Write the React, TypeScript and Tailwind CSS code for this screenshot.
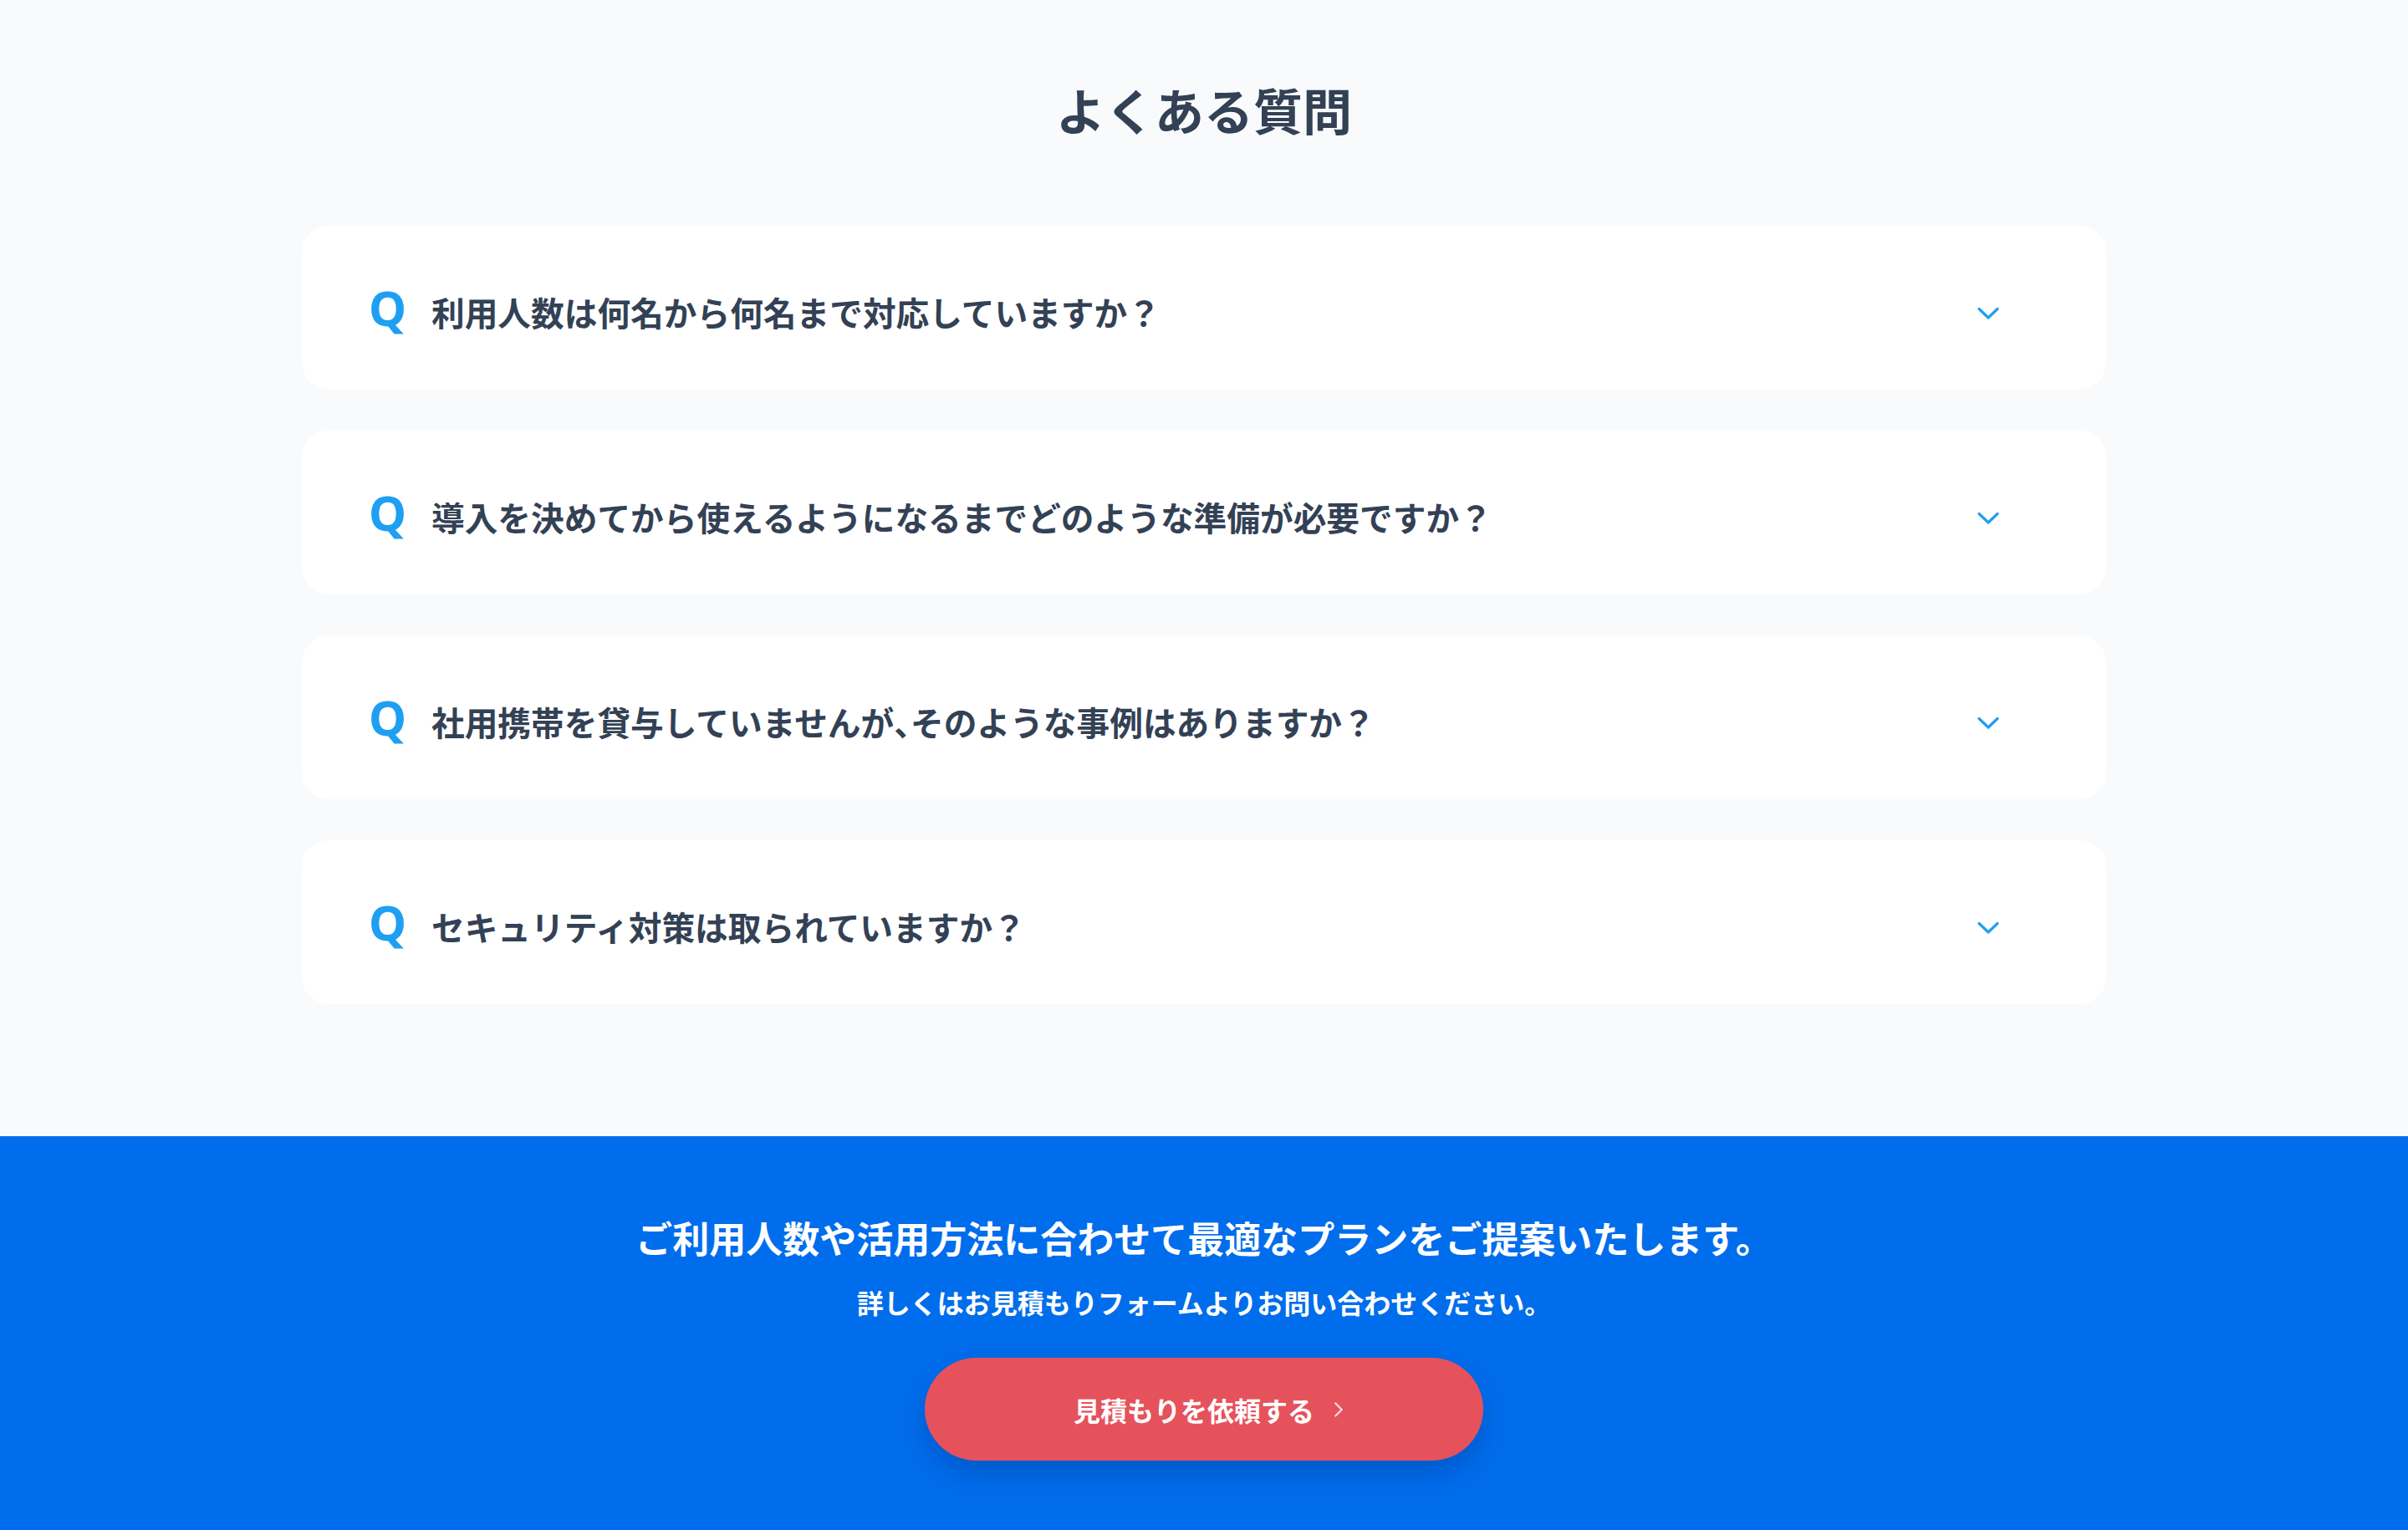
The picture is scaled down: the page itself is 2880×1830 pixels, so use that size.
import { ChevronRight } from "lucide-react";

const questions = [
  "利用人数は何名から何名まで対応していますか？",
  "導入を決めてから使えるようになるまでどのような準備が必要ですか？",
  "社用携帯を貸与していませんが、そのような事例はありますか？",
  "セキュリティ対策は取られていますか？",
];

const jpFont = "[font-family:'Noto_Sans_CJK_JP','Noto_Sans',sans-serif]";

function ChevronDown() {
  return (
    <svg width="26" height="16" viewBox="0 0 26 16" fill="none" aria-hidden="true" className="mt-[14px]">
      <path d="M2 2.5L13 13L24 2.5" stroke="#1f9ff2" strokeWidth="3.2" strokeLinecap="round" strokeLinejoin="round" />
    </svg>
  );
}

// the ideographic comma is set half-width, as in proportional Japanese text
function Question({ text }: { text: string }) {
  const parts = text.split("、");
  return (
    <>
      {parts.map((part, i) => (
        <span key={i}>
          {part}
          {i < parts.length - 1 && <span className="[font-feature-settings:'halt']">、</span>}
        </span>
      ))}
    </>
  );
}

function FaqItem({ text }: { text: string }) {
  return (
    <button
      type="button"
      className="flex h-[196px] w-full items-center rounded-[32px] bg-white pl-[80px] pr-[128px] text-left"
    >
      <span className="w-[44px] font-['Noto_Sans',sans-serif] text-[57px] font-bold leading-none text-[#1f9ff2]">
        Q
      </span>
      <span className="ml-[31px] flex-1 pt-[10px] text-[39.7px] font-bold leading-none text-[#334155]">
        <Question text={text} />
      </span>
      <ChevronDown />
    </button>
  );
}

export default function App() {
  return (
    <div className={`min-h-screen w-full bg-[#f8fafc] ${jpFont}`}>
      <section className="flex flex-col items-center pb-[158px] pt-[86px]">
        <h2 className="text-[59px] font-bold leading-[90px] text-[#334155]">よくある質問</h2>
        <div className="mt-[94px] flex w-[2158px] flex-col gap-[49px]">
          {questions.map((q) => (
            <FaqItem key={q} text={q} />
          ))}
        </div>
      </section>

      <section className="flex flex-col items-center bg-[#006dec] pb-[83px] pt-[88px] text-white">
        <p className="text-[44px] font-bold leading-[66px]">
          ご利用人数や活用方法に合わせて最適なプランをご提案いたします。
        </p>
        <p className="mt-[20px] text-[32px] font-bold leading-[48px]">
          詳しくはお見積もりフォームよりお問い合わせください。
        </p>
        <a
          href="#estimate"
          className="mt-[43px] flex h-[123px] w-[668px] items-center justify-center gap-[14px] rounded-full bg-[#e5525c] pl-[20px] text-[32px] font-bold text-white shadow-[0_16px_32px_rgba(0,40,120,0.28)]"
        >
          見積もりを依頼する
          <ChevronRight className="h-[30px] w-[30px] opacity-80" strokeWidth={1.8} />
        </a>
      </section>
    </div>
  );
}
